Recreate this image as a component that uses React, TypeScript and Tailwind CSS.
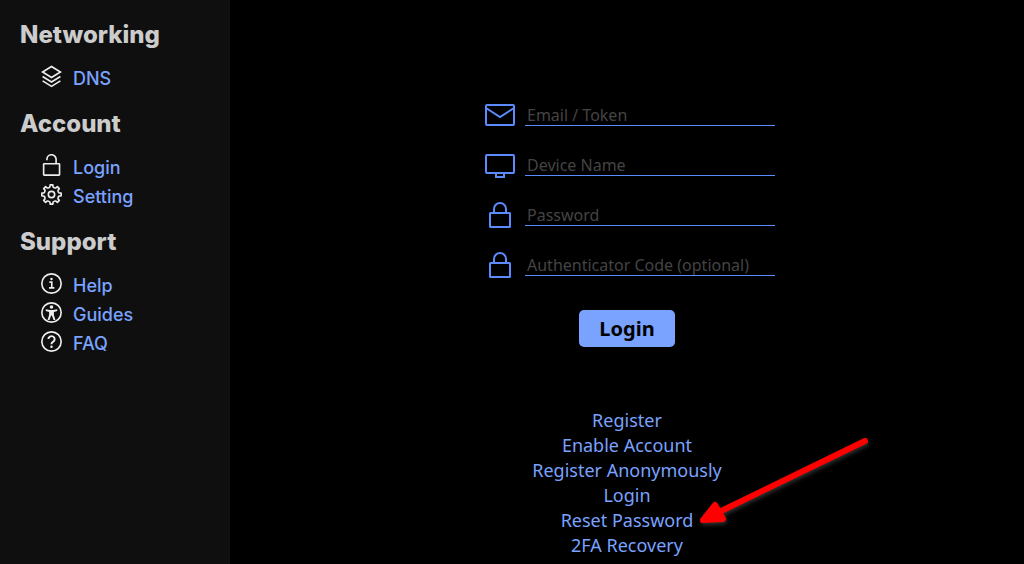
import type { ReactNode } from "react";

// Outline of an eight-toothed cog centred on (12, 12).
function cogOutline() {
  const at = (radius: number, degrees: number) => {
    const angle = (degrees * Math.PI) / 180;
    return `${(12 + radius * Math.cos(angle)).toFixed(2)} ${(12 + radius * Math.sin(angle)).toFixed(2)}`;
  };
  const teeth = Array.from({ length: 8 }, (_, i) => {
    const middle = i * 45;
    return `${at(8.2, middle - 11)}L${at(10.2, middle - 8)}L${at(10.2, middle + 8)}L${at(8.2, middle + 11)}Q${at(7, middle + 22.5)} ${at(8.2, middle + 34)}`;
  });
  return `M${teeth.join("L")}Z`;
}

const iconPaths: Record<string, ReactNode> = {
  layers: (
    <>
      <path d="M12 1.6 21.3 7.3 12 13 2.7 7.3Z" />
      <path d="M2.7 12 12 17.7 21.3 12" />
      <path d="M2.7 16.6 12 22.3 21.3 16.6" />
    </>
  ),
  unlocked: (
    <>
      <rect x="3.8" y="10.2" width="16.6" height="11.8" rx="0.6" />
      <path d="M16.8 10.2V5.6a4.8 4.8 0 0 0-9.6 0V6.4" />
    </>
  ),
  settings: (
    <>
      <path d={cogOutline()} strokeLinejoin="round" />
      <circle cx="12" cy="12" r="3.3" />
    </>
  ),
  info: (
    <>
      <circle cx="12" cy="12" r="10.1" />
      <path d="M9.8 10.6h2.5v6M9.4 16.6h5.6" />
      <circle cx="12" cy="7.4" r="1.3" fill="currentColor" stroke="none" />
    </>
  ),
  guides: (
    <>
      <circle cx="12" cy="12" r="10.1" />
      <circle cx="12" cy="6.3" r="1.9" fill="currentColor" stroke="none" />
      <path
        d="M6 8.6 10.5 9.4h3L18 8.6v1.9l-3.5.9v3.1l1.6 5.3h-2L12.4 15h-.8l-1.7 4.8h-2l1.6-5.3v-3.1L6 10.5Z"
        fill="currentColor"
        stroke="none"
      />
    </>
  ),
  faq: (
    <>
      <circle cx="12" cy="12" r="10.1" />
      <path d="M8.7 9.5a3.3 3.1 0 1 1 5.1 2.6q-1.8 1-1.8 2.5v.2" strokeWidth="2" />
      <circle cx="12" cy="17.4" r="1.3" fill="currentColor" stroke="none" />
    </>
  ),
};

const sections = [
  { title: "Networking", items: [{ label: "DNS", icon: "layers" }] },
  {
    title: "Account",
    items: [
      { label: "Login", icon: "unlocked" },
      { label: "Setting", icon: "settings" },
    ],
  },
  {
    title: "Support",
    items: [
      { label: "Help", icon: "info" },
      { label: "Guides", icon: "guides" },
      { label: "FAQ", icon: "faq" },
    ],
  },
];

const lockIcon = (
  <>
    <rect x="5" y="13" width="20" height="14" rx="0.5" />
    <path d="M9 13V9a6 6 0 0 1 12 0v4" />
  </>
);

const fields = [
  {
    id: "email",
    label: "Email / Token",
    type: "text",
    icon: (
      <>
        <rect x="1" y="5" width="28" height="20" rx="1" />
        <path d="M1 8 15 17 29 8" />
      </>
    ),
  },
  {
    id: "device",
    label: "Device Name",
    type: "text",
    icon: (
      <>
        <rect x="1" y="5" width="28" height="18" rx="1" />
        <path d="M11 23v4h8v-4" />
      </>
    ),
  },
  { id: "password", label: "Password", type: "password", icon: lockIcon },
  { id: "code", label: "Authenticator Code (optional)", type: "text", icon: lockIcon },
];

const links = ["Register", "Enable Account", "Register Anonymously", "Login", "Reset Password", "2FA Recovery"];

function Sidebar() {
  return (
    <nav className="w-[230px] shrink-0 bg-[#0f0f0f] pt-1 font-['Inter',sans-serif]">
      {sections.map((section) => (
        <section key={section.title}>
          <h2 className="px-5 pt-[2px] text-2xl leading-[58px] font-extrabold text-[#cccccc]">{section.title}</h2>
          <ul>
            {section.items.map((item) => (
              <li key={item.label} className="pl-10">
                <a href="#" className="flex h-[29px] gap-[10px] text-lg leading-[29px] font-medium text-[#7aa2ff]">
                  <svg
                    viewBox="0 0 24 24"
                    className="mt-px size-[23px] text-[#eeeeee]"
                    fill="none"
                    stroke="currentColor"
                    strokeWidth="1.7"
                    aria-hidden="true"
                  >
                    {iconPaths[item.icon]}
                  </svg>
                  {item.label}
                </a>
              </li>
            ))}
          </ul>
        </section>
      ))}
    </nav>
  );
}

export default function App() {
  return (
    <div className="flex min-h-screen bg-black">
      <Sidebar />
      <main className="flex grow flex-col items-center pt-[90px] font-['Noto_Sans',sans-serif]">
        <form className="flex flex-col items-center" onSubmit={(e) => e.preventDefault()}>
          <div className="pl-[6px]">
            {fields.map((field) => (
              <div key={field.id} className="flex h-[50px] items-center gap-[10px]">
                <label htmlFor={field.id} aria-label={field.label}>
                  <svg
                    viewBox="0 0 30 30"
                    className="size-[30px] text-[#5c8bff]"
                    fill="none"
                    stroke="currentColor"
                    strokeWidth="2"
                    aria-hidden="true"
                  >
                    {field.icon}
                  </svg>
                </label>
                <input
                  id={field.id}
                  type={field.type}
                  placeholder={field.label}
                  className="h-[22px] w-[250px] border-b border-[#5c8bff] bg-transparent px-[2px] text-base text-[#cccccc] outline-none placeholder:text-[#444444]"
                />
              </div>
            ))}
          </div>
          <button
            type="submit"
            className="mt-5 h-[37px] w-24 rounded-[5px] bg-[#7aa2ff] text-xl leading-[37px] font-bold text-black"
          >
            Login
          </button>
        </form>
        <ul className="mt-[61px] text-center text-lg leading-[25px] text-[#7aa2ff]">
          {links.map((link) => (
            <li key={link} className="relative">
              <a href="#">{link}</a>
              {link === "Reset Password" && (
                <svg
                  viewBox="0 0 180 100"
                  className="pointer-events-none absolute bottom-0 left-[163px] h-[100px] w-[180px] drop-shadow-[1px_2px_2px_#333333]"
                  aria-hidden="true"
                >
                  <path d="M170 8 22 80" stroke="#ff0000" strokeWidth="6" strokeLinecap="round" />
                  <path
                    d="M8 87 20 72 28 86Z"
                    fill="#ff0000"
                    stroke="#ff0000"
                    strokeWidth="6"
                    strokeLinejoin="round"
                  />
                </svg>
              )}
            </li>
          ))}
        </ul>
      </main>
    </div>
  );
}
